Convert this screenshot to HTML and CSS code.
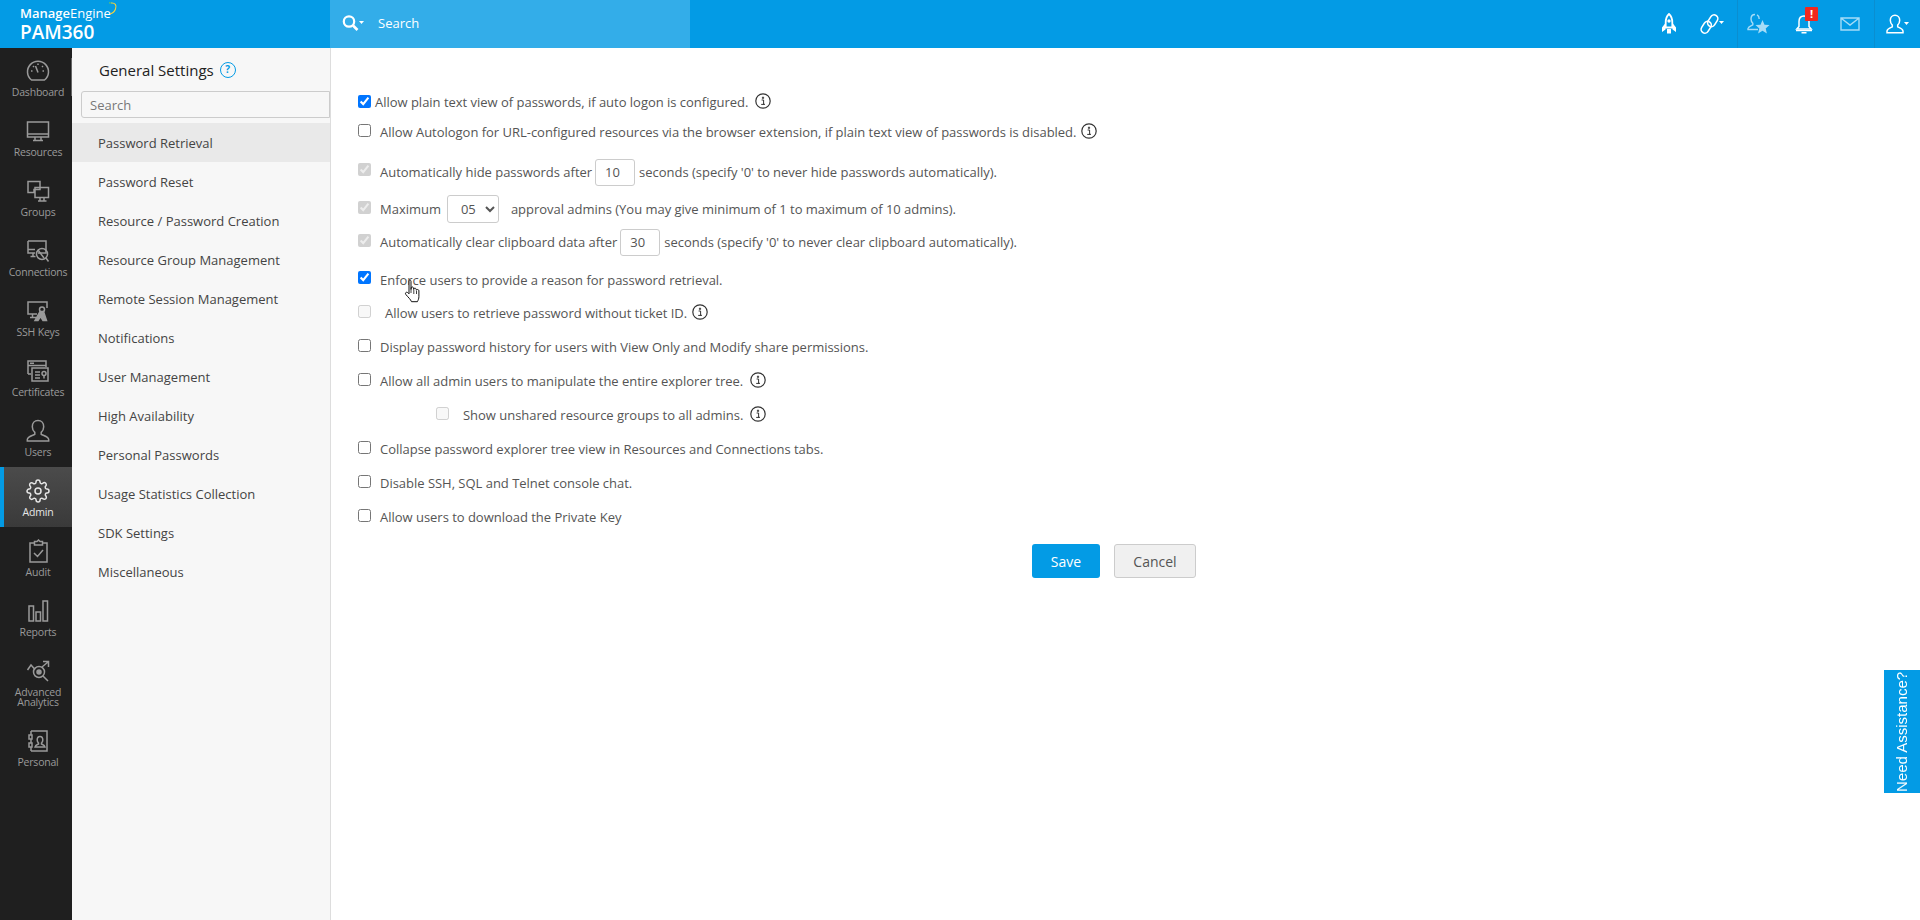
FILE: index.html
```html
<!DOCTYPE html>
<html lang="en">
<head>
    <meta charset="UTF-8">
    <title>General Settings - PAM360</title>
    <link rel="stylesheet" href="styles.css">
</head>
<body>

    <svg class="sprite" width="0" height="0">
        <symbol id="info" viewBox="0 0 16 16">
            <circle cx="8" cy="8" r="7.2" fill="none" stroke="#333" stroke-width="1.2"/>
            <path d="M6.6 7h2v4.3h1M6.2 11.4h3.6M7.4 4.2h1.2v1.2H7.4z" fill="none" stroke="#333" stroke-width="1"/>
        </symbol>
    </svg>

    <!-- Top bar -->
    <header class="topbar">
        <div class="brand">
            <div class="brand-company"><b>Manage</b>Engine<svg class="brand-arc" width="10" height="14" viewBox="0 0 10 14"><path d="M2 1c4-.5 6 2 4.500 6S3 11.500 1 12" fill="none" stroke="#f5d33c" stroke-width="1.100"/><path d="M-4 4C-3 1.500-1 .5 2 1" fill="none" stroke="#5fc26b" stroke-width="1.100"/></svg></div>
            <div class="brand-product">PAM360</div>
        </div>
        <div class="top-search">
            <svg width="24" height="18" viewBox="0 0 24 18"><circle cx="8" cy="7.500" r="5.200" fill="none" stroke="#fff" stroke-width="2.200"/><path d="M12 11.500l4.500 4.500" stroke="#fff" stroke-width="2.600"/><path d="M18 7h5l-2.500 3z" fill="#fff"/></svg>
            <span>Search</span>
        </div>
        <div class="top-icons">
            <span class="top-icon rocket">
                <svg width="16" height="22" viewBox="0 0 16 22"><path d="M8 1c2.600 2.300 3.300 5.400 3.300 8.500v5H4.700v-5C4.700 6.400 5.400 3.300 8 1z" fill="none" stroke="#fff" stroke-width="1.800"/><circle cx="8" cy="8" r="1.700" fill="#fff"/><path d="M4.500 10L1 14.500V19l3.500-2.500zM11.500 10l3.500 4.500V19l-3.500-2.500zM6 16h4v4.500H6z" fill="#fff"/></svg>
            </span>
            <span class="top-icon link">
                <svg width="26" height="22" viewBox="0 0 26 22"><rect x="10" y="1.500" width="7.500" height="12.500" rx="3.700" transform="rotate(32 13.700 7.700)" fill="none" stroke="#fff" stroke-width="1.600"/><rect x="3.500" y="8" width="7.500" height="12.500" rx="3.700" transform="rotate(32 7.200 14.200)" fill="none" stroke="#fff" stroke-width="1.600"/><path d="M20 8h5l-2.500 3z" fill="#fff"/></svg>
            </span>
            <span class="top-divider"></span>
            <span class="top-icon star">
                <svg width="24" height="22" viewBox="0 0 24 22"><path d="M8 1.500c-2.500 0-4 2-4 4.500 0 1.800.8 3.300 1.800 4.200v1.600C4 12.700 1.300 13.500 1 15.500v1h10" fill="none" stroke="#a5dcf7" stroke-width="1.400"/><path d="M10 1.900c1.400.7 2.200 2.200 2.200 4.100" fill="none" stroke="#a5dcf7" stroke-width="1.400"/><path d="M15.500 7l2 4.700 5 .4-3.800 3.300 1.200 5-4.400-2.700-4.400 2.700 1.200-5-3.800-3.300 5-.4z" fill="#a5dcf7"/></svg>
            </span>
            <span class="top-icon bell">
                <svg width="18" height="20" viewBox="0 0 18 20"><path d="M9 2C5.800 2 4 4.400 4 7.500v5L1.800 15h14.400L14 12.500v-5C14 4.400 12.200 2 9 2z" fill="none" stroke="#fff" stroke-width="1.500"/><path d="M1 16.500h16M6.500 18.700h5" stroke="#fff" stroke-width="1.500"/></svg>
                <span class="badge">!</span>
            </span>
            <span class="top-icon mail">
                <svg width="20" height="14" viewBox="0 0 20 14"><path d="M1 1h18v12H1zM1.500 1.500L10 8l8.500-6.500" fill="none" stroke="#a5dcf7" stroke-width="1.400"/></svg>
            </span>
            <span class="top-divider"></span>
            <span class="top-icon user">
                <svg width="24" height="20" viewBox="0 0 24 20"><path d="M9 1.200C6.200 1.200 4.300 3.400 4.300 6.300c0 2 .9 3.700 2 4.800v1.700C4.500 13.700 1.300 14.500 1 17v1.700h16V17c-.3-2.500-3.500-3.300-5.300-4.200v-1.700c1.100-1.100 2-2.800 2-4.800 0-2.900-1.900-5.100-4.700-5.100z" fill="none" stroke="#fff" stroke-width="1.500"/><path d="M18 8h5l-2.500 3z" fill="#fff"/></svg>
            </span>
        </div>
    </header>

    <div class="layout">

        <!-- Main navigation -->
        <nav class="nav">
            <span class="nav-thumb"></span>
            <a class="nav-item">
                <svg class="nav-icon" viewBox="0 0 24 24"><path d="M5.500 21a10.500 10.500 0 1 1 13 0z"/><path d="M12 13.500L9.500 7M5 12h1.500M18 12h-1.500M7 7l1 1M17 7l-1 1M12 4.500V6"/></svg>
                <span class="nav-label">Dashboard</span>
            </a>
            <a class="nav-item">
                <svg class="nav-icon" viewBox="0 0 24 24"><path d="M1.500 3h21v15h-21zM1.500 15h21M9 18v3M15 18v3M7 21.500h10"/></svg>
                <span class="nav-label">Resources</span>
            </a>
            <a class="nav-item">
                <svg class="nav-icon" viewBox="0 0 24 24"><path d="M2 2.500h12v8H8v3H2zM9 8.500h13.500v10H9zM14 18.500v3M18 18.500v3M12 22h8.500"/></svg>
                <span class="nav-label">Groups</span>
            </a>
            <a class="nav-item">
                <svg class="nav-icon" viewBox="0 0 24 24"><path d="M2 2h18v12h-8M2 2v12h7M2 10.500h7M7 14v3M4.500 17.500h5"/><circle cx="16" cy="15" r="5.500"/><path d="M12 11l6 8M20 19l2.500 3.500"/></svg>
                <span class="nav-label">Connections</span>
            </a>
            <a class="nav-item">
                <svg class="nav-icon" viewBox="0 0 24 24"><path d="M11 15H2V3h19v6M6.500 15v3M4 18.500h6"/><circle cx="16" cy="10.500" r="2.500"/><path class="fill" d="M14 12.500l-5 9h3l2.500-4 2.500 4h3.500l-3-9z"/></svg>
                <span class="nav-label">SSH Keys</span>
            </a>
            <a class="nav-item">
                <svg class="nav-icon" viewBox="0 0 24 24"><path d="M2 15V2h18v6M2 6.500h18M4 4.300h4M2 15h3"/><path d="M6 9h16v13H6zM9 13h5M9 16h5M9 19h5"/><circle cx="18" cy="14.500" r="2"/><path d="M18 16.500v3"/></svg>
                <span class="nav-label">Certificates</span>
            </a>
            <a class="nav-item">
                <svg class="nav-icon" viewBox="0 0 24 24"><path d="M12 1.500C8.500 1.500 6.300 4.200 6.300 7.700c0 2.400 1.100 4.400 2.500 5.700v2C6.500 16.600 1.700 17.500 1.300 20.500v1.500h21.400v-1.500c-.4-3-5.200-3.900-7.500-5.100v-2c1.400-1.300 2.500-3.300 2.500-5.700 0-3.500-2.200-6.200-5.700-6.200z"/></svg>
                <span class="nav-label">Users</span>
            </a>
            <a class="nav-item active">
                <svg class="nav-icon" viewBox="0 0 24 24"><circle cx="12" cy="12" r="3"/><path d="M19.400 15a1.650 1.650 0 0 0 .33 1.820l.06.06a2 2 0 0 1 0 2.830 2 2 0 0 1-2.830 0l-.06-.06a1.650 1.650 0 0 0-1.820-.33 1.650 1.650 0 0 0-1 1.510V21a2 2 0 0 1-2 2 2 2 0 0 1-2-2v-.09A1.650 1.650 0 0 0 9 19.400a1.650 1.650 0 0 0-1.820.33l-.06.06a2 2 0 0 1-2.830 0 2 2 0 0 1 0-2.830l.06-.06a1.650 1.650 0 0 0 .33-1.820 1.650 1.650 0 0 0-1.510-1H3a2 2 0 0 1-2-2 2 2 0 0 1 2-2h.09A1.650 1.650 0 0 0 4.600 9a1.650 1.650 0 0 0-.33-1.820l-.06-.06a2 2 0 0 1 0-2.830 2 2 0 0 1 2.830 0l.06.06a1.650 1.650 0 0 0 1.820.33H9a1.650 1.650 0 0 0 1-1.510V3a2 2 0 0 1 2-2 2 2 0 0 1 2 2v.09a1.650 1.650 0 0 0 1 1.510 1.650 1.650 0 0 0 1.820-.33l.06-.06a2 2 0 0 1 2.830 0 2 2 0 0 1 0 2.830l-.06.06a1.650 1.650 0 0 0-.33 1.820V9a1.650 1.650 0 0 0 1.510 1H21a2 2 0 0 1 2 2 2 2 0 0 1-2 2h-.09a1.650 1.650 0 0 0-1.510 1z"/></svg>
                <span class="nav-label">Admin</span>
            </a>
            <a class="nav-item">
                <svg class="nav-icon" viewBox="0 0 24 24"><path d="M8.500 4H4v19h17V4h-4.500M8.500 2.500h2.500l1.500-1.500 1.500 1.500h2.500V6h-8zM8 14l3.500 3.500L17 11"/></svg>
                <span class="nav-label">Audit</span>
            </a>
            <a class="nav-item">
                <svg class="nav-icon" viewBox="0 0 24 24"><path d="M3 7h4.500v15H3zM10 13h4.500v9H10zM17 2h4.500v20H17z"/></svg>
                <span class="nav-label">Reports</span>
            </a>
            <a class="nav-item tall">
                <svg class="nav-icon" viewBox="0 0 24 24"><circle cx="13" cy="13" r="5.500"/><circle class="fill" cx="13" cy="13" r="2"/><path d="M17 17l5 5M1.500 11l3.500-5 4 4.500M16 8l6-5M17 2.500h5.500V8"/></svg>
                <span class="nav-label">Advanced Analytics</span>
            </a>
            <a class="nav-item">
                <svg class="nav-icon" viewBox="0 0 24 24"><path d="M5 2h16v20H5M5 2v4M5 10v4M5 18v4M3 6h3v4H3zM3 14h3v4H3zM9 18c.3-2 2.400-2.500 3.500-3v-1c-.8-.7-1.300-1.700-1.300-3 0-2 1-3.500 2.800-3.500s2.800 1.500 2.800 3.500c0 1.300-.5 2.300-1.300 3v1c1.100.5 3.200 1 3.500 3z"/></svg>
                <span class="nav-label">Personal</span>
            </a>
        </nav>

        <!-- Settings categories -->
        <aside class="side">
            <div class="side-title">
                <span>General Settings</span>
                <span class="help">?</span>
            </div>
            <input class="side-search" type="text" placeholder="Search">
            <ul class="side-list">
                <li class="current">Password Retrieval</li>
                <li>Password Reset</li>
                <li>Resource / Password Creation</li>
                <li>Resource Group Management</li>
                <li>Remote Session Management</li>
                <li>Notifications</li>
                <li>User Management</li>
                <li>High Availability</li>
                <li>Personal Passwords</li>
                <li>Usage Statistics Collection</li>
                <li>SDK Settings</li>
                <li>Miscellaneous</li>
            </ul>
        </aside>

        <!-- Password retrieval options -->
        <main class="main">
            <div class="options">
                <label class="row first-row"><input type="checkbox" checked>Allow plain text view of passwords, if auto logon is configured.<svg class="info wide"><use href="#info"/></svg></label>
                <label class="row second-row"><input type="checkbox"><span class="text">Allow Autologon for URL-configured resources via the browser extension, if plain text view of passwords is disabled.</span><svg class="info"><use href="#info"/></svg></label>
                <div class="row hide-row"><input type="checkbox" checked disabled><span class="text">Automatically hide passwords after</span><input class="num" type="text" value="10"><span>seconds (specify '0' to never hide passwords automatically).</span></div>
                <div class="row max-row"><input type="checkbox" checked disabled><span class="text">Maximum</span><select class="count"><option>05</option></select><span class="after-select">approval admins (You may give minimum of 1 to maximum of 10 admins).</span></div>
                <div class="row clear-row"><input type="checkbox" checked disabled><span class="text">Automatically clear clipboard data after</span><input class="num" type="text" value="30"><span>seconds (specify '0' to never clear clipboard automatically).</span></div>
                <label class="row enforce-row"><input type="checkbox" checked><span class="text">Enforce users to provide a reason for password retrieval.</span></label>
                <label class="row ticket-row"><input type="checkbox" disabled><span class="text indent">Allow users to retrieve password without ticket ID.</span><svg class="info"><use href="#info"/></svg></label>
                <label class="row"><input type="checkbox"><span class="text">Display password history for users with View Only and Modify share permissions.</span></label>
                <label class="row"><input type="checkbox"><span class="text">Allow all admin users to manipulate the entire explorer tree.</span><svg class="info wide"><use href="#info"/></svg></label>
                <label class="row sub"><input type="checkbox" disabled><span class="text">Show unshared resource groups to all admins.</span><svg class="info wide"><use href="#info"/></svg></label>
                <label class="row"><input type="checkbox"><span class="text">Collapse password explorer tree view in Resources and Connections tabs.</span></label>
                <label class="row"><input type="checkbox"><span class="text">Disable SSH, SQL and Telnet console chat.</span></label>
                <label class="row"><input type="checkbox"><span class="text">Allow users to download the Private Key</span></label>
            </div>
            <div class="actions">
                <button class="btn btn-save">Save</button>
                <button class="btn btn-cancel">Cancel</button>
            </div>
        </main>
    </div>

    <!-- Overlays -->
    <svg class="pointer" width="18" height="26" viewBox="0 0 18 26"><path d="M5 1.500c.8-.8 2-.4 2 .8v8l.3-2c1-.7 2-.3 2.200.8l.2 1.400.3-1c1-.6 2-.2 2.200.8l.2 1 .3-.6c1-.5 2-.1 2.200 1v6c0 2-.7 3.300-1.500 5H7.500c-1-2.500-3-4-5.500-7-.8-1-.7-2 .3-2.400.8-.3 1.700.4 2.700 1.500z" fill="#fff" stroke="#111" stroke-width="1"/><path d="M7 10v4M9.800 11v4M12.500 12v3" stroke="#111" stroke-width=".8"/></svg>
    <div class="assist">Need Assistance?</div>

</body>
</html>
```

FILE: styles.css
```css
* {
    box-sizing: border-box;
}
body {
    margin: 0;
    height: 920px;
    overflow: hidden;
    font-family: "Open Sans", sans-serif;
    font-size: 13px;
    color: #555;
    background-color: #fff;
}
.sprite {
    position: absolute;
}

/* top bar */
.topbar {
    position: relative;
    z-index: 2;
    display: flex;
    height: 48px;
    background-color: #039be5;
    color: #fff;
}
.brand {
    width: 330px;
    padding: 5px 0 0 20px;
}
.brand-company {
    display: flex;
    height: 16px;
    font-size: 13px;
    line-height: 16px;
}
.brand-company b {
    font-weight: 600;
}
.brand-arc {
    margin: -3px 0 0 -2px;
}
.brand-product {
    font-size: 19px;
    font-weight: 600;
    line-height: 23px;
}
.top-search {
    display: flex;
    align-items: center;
    width: 360px;
    padding: 0 0 2px 11px;
    background-color: #33ade9;
    font-size: 13px;
}
.top-search span {
    margin-left: 13px;
}
.top-icons {
    display: flex;
    align-items: center;
    margin-left: auto;
    padding-right: 10px;
}
.top-icon {
    position: relative;
    display: flex;
    justify-content: center;
    align-items: center;
}
.top-icon svg {
    display: block;
}
.rocket { width: 16px; }
.link { width: 26px; margin-left: 22px; }
.star { width: 24px; margin-left: 9px; }
.bell { width: 18px; margin-left: 24px; }
.mail { width: 20px; margin-left: 27px; }
.user { width: 24px; margin-left: 11px; }
.top-divider {
    width: 1px;
    height: 48px;
    margin-left: 14px;
    background-color: #0a8ed0;
}
.link + .top-divider {
    margin-left: 12px;
}
.badge {
    position: absolute;
    top: -7px;
    left: 10px;
    width: 13px;
    height: 14px;
    border-radius: 1px;
    background-color: #f0281e;
    font-size: 11px;
    font-weight: 700;
    line-height: 13px;
    text-align: center;
}

/* page body */
.layout {
    display: flex;
    height: 872px;
}

/* main nav */
.nav {
    position: relative;
    flex: none;
    width: 72px;
    margin-top: -1px;
    background-color: #1f1f1f;
}
.nav-thumb {
    position: absolute;
    top: 11px;
    right: 0;
    width: 1px;
    height: 38px;
    background-color: #666;
}
.nav-item {
    display: block;
    height: 60px;
    padding-top: 12px;
    border-left: 4px solid transparent;
    text-align: center;
    color: #9a9a9a;
}
.nav-item.tall {
    height: 70px;
}
.nav-item.active {
    border-left-color: #039be5;
    background: linear-gradient(#4b4b4b, #3a3a3a);
    color: #e6e6e6;
}
.nav-icon {
    display: block;
    width: 24px;
    height: 24px;
    margin: 0 auto;
    fill: none;
    stroke: currentColor;
    stroke-width: 1.500;
}
.nav-icon .fill {
    fill: currentColor;
}
.nav-label {
    display: block;
    margin-top: 2px;
    font-size: 10.500px;
    line-height: 14px;
    letter-spacing: -.2px;
}
.tall .nav-label {
    margin: 4px auto 0;
    width: 60px;
    line-height: 10px;
}

/* settings list */
.side {
    flex: none;
    width: 259px;
    border-right: 1px solid #ddd;
    background-color: #f7f7f7;
}
.side-title {
    display: flex;
    align-items: center;
    height: 43px;
    padding-left: 27px;
    font-size: 15px;
    color: #222;
}
.help {
    width: 16px;
    height: 16px;
    margin-left: 6px;
    border: 1.500px solid #039be5;
    border-radius: 50%;
    font-size: 10px;
    font-weight: 700;
    line-height: 13px;
    text-align: center;
    color: #039be5;
}
.side-search {
    display: block;
    width: 249px;
    height: 27px;
    margin-left: 9px;
    padding: 0 8px;
    border: 1px solid #ccc;
    border-radius: 3px 0 0 3px;
    background-color: #f7f7f7;
    font: 13px "Open Sans", sans-serif;
}
.side-search::placeholder {
    color: #777;
}
.side-list {
    list-style-type: none;
    margin: 5px 0 0;
    padding: 0;
}
.side-list li {
    height: 39px;
    padding: 1px 0 0 26px;
    line-height: 39px;
    color: #444;
}
.side-list .current {
    background-color: #e9e9e9;
}

/* options */
.main {
    flex: 1;
    padding: 39px 50px 0 27px;
    letter-spacing: -.02px;
}
.row {
    display: flex;
    align-items: center;
    height: 30px;
    margin-top: 4px;
}
.row.first-row { margin-top: 0; }
.row.second-row { margin-top: 0; }
.row.hide-row { margin-top: 10px; }
.row.max-row { margin-top: 7px; }
.row.clear-row { margin-top: 3px; }
.row.enforce-row { margin-top: 8px; }
.row.ticket-row { margin-top: 3px; }
.row input[type="checkbox"] {
    flex: none;
    width: 13px;
    height: 13px;
    margin: 0 4px 3px 0;
}
.row.first-row input[type="checkbox"] {
    margin-bottom: 1px;
}
.row.hide-row input[type="checkbox"],
.row.enforce-row input[type="checkbox"] {
    margin-bottom: 5px;
}
.text {
    margin-left: 5px;
}
.text.indent {
    margin-left: 10px;
}
.sub {
    padding-left: 78px;
}
.sub .text {
    margin-left: 10px;
}
.info {
    width: 16px;
    height: 16px;
    margin: 0 0 2px 5px;
}
.info.wide {
    margin-left: 7px;
}
.num {
    width: 40px;
    height: 27px;
    margin: 0 4px 0 3px;
    padding: 0 9px;
    border: 1px solid #ccc;
    border-radius: 3px;
    font: 13px "Open Sans", sans-serif;
    color: #555;
}
.count {
    width: 52px;
    height: 28px;
    margin-left: 6px;
    padding-left: 9px;
    border: 1px solid #ccc;
    border-radius: 3px;
    background-color: #fff;
    font: 13px "Open Sans", sans-serif;
    color: #555;
}
.after-select {
    margin-left: 12px;
}
.actions {
    display: flex;
    justify-content: center;
    gap: 14px;
    margin-top: 12px;
}
.btn {
    height: 34px;
    border-radius: 3px;
    font: 14px "Open Sans", sans-serif;
}
.btn-save {
    width: 68px;
    border: 0;
    background-color: #039be5;
    color: #fff;
}
.btn-cancel {
    width: 82px;
    border: 1px solid #ccc;
    background-color: #f0f0f0;
    color: #555;
}

/* overlays */
.pointer {
    position: absolute;
    top: 279px;
    left: 404px;
}
.assist {
    position: fixed;
    top: 670px;
    right: 0;
    width: 36px;
    height: 123px;
    background-color: #039be5;
    color: #fff;
    font-family: "Liberation Sans", sans-serif;
    font-size: 15px;
    line-height: 36px;
    text-align: center;
    white-space: nowrap;
    writing-mode: vertical-rl;
    transform: rotate(180deg);
}
```
